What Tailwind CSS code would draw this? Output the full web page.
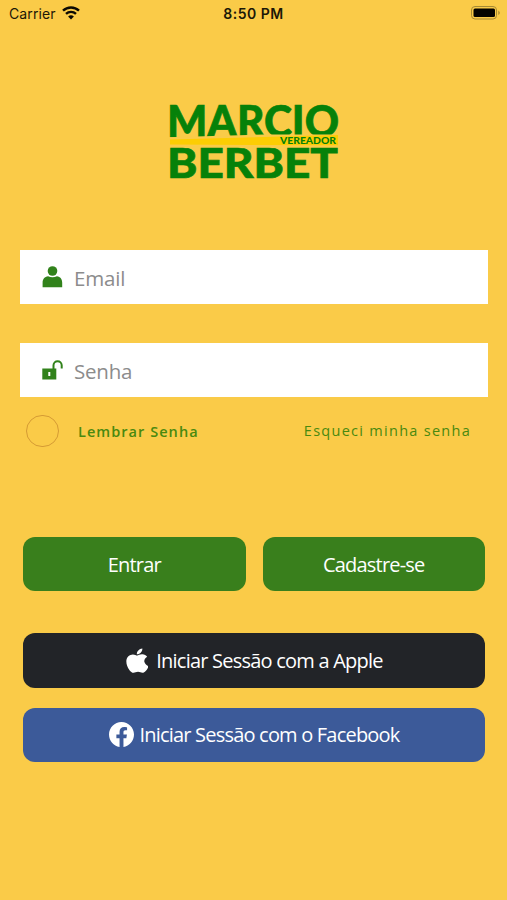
<!DOCTYPE html>
<html lang="pt-BR">
<head>
<meta charset="utf-8">
<meta name="viewport" content="width=device-width, initial-scale=1">
<title>Marcio Berbet</title>
<script src="https://cdn.jsdelivr.net/npm/@tailwindcss/browser@4"></script>
</head>
<body class="bg-[#facb48] font-['Open_Sans','Noto_Sans',sans-serif]">
<div class="flex h-[900px] w-[507px] flex-col overflow-hidden">
  <header class="grid h-[27px] grid-cols-3 items-center pl-[9px] pr-[6px] font-['Inter',sans-serif] text-[14px] text-[#1c1807]">
    <div class="flex items-center gap-[6px]">
      <span class="tracking-[0.1px]">Carrier</span>
      <svg class="-mt-[2px] h-[14px] w-[18px]" viewBox="0 0 18 14" fill="none" stroke="#0c0a03" stroke-width="2.4"><path d="M1 4.7a11.6 11.6 0 0 1 16 0M4 7.9a7.2 7.2 0 0 1 10 0"/><path d="M9 13.6 6.1 10.6a4.2 4.2 0 0 1 5.8 0Z" fill="#0c0a03" stroke="none"/></svg>
    </div>
    <span class="-ml-[3px] text-center font-semibold tracking-[0.500px] whitespace-nowrap">8:50 PM</span>
    <svg class="-mt-px h-[14px] w-[30px] justify-self-end" viewBox="0 0 30 14"><rect x=".5" y=".5" width="25" height="12.5" rx="3.5" fill="none" stroke="#a58933"/><rect x="2.5" y="2.5" width="21.500" height="8.500" rx="1.500" fill="#050400"/><path d="M27.300 4.500q3 2.300 0 4.600Z" fill="#a58933"/></svg>
  </header>

  <main class="flex flex-col">
    <svg class="mt-[73px] ml-[160px] h-[84px] w-[188px] overflow-visible" viewBox="160 100 188 84" font-family="Lato, sans-serif" fill="#068109">
      <text x="167" y="136.500" font-size="43" font-weight="900" textLength="172" lengthAdjust="spacingAndGlyphs" stroke="#068109" stroke-width=".7">MARCIO</text>
      <path d="M169 137.300 264 134.500H340V147H169Z" fill="#facb48"/>
      <path d="M170 139.500 338 135V145.300L170 144.500Z" fill="#fccd03"/>
      <text x="280" y="143.800" font-size="10" font-weight="900" textLength="56" lengthAdjust="spacingAndGlyphs">VEREADOR</text>
      <text x="167" y="177.500" font-size="42.500" font-weight="900" textLength="171" lengthAdjust="spacingAndGlyphs" stroke="#068109" stroke-width=".7">BERBET</text>
    </svg>

    <label class="mt-[66px] mr-[19px] ml-5 flex h-[54px] items-center bg-white pl-[22px] text-[20.500px] text-[#8c8c8c]">
      <svg class="mr-[11px] h-[22px] w-[21px] shrink-0" viewBox="0 0 21 22" fill="#31821b"><circle cx="10.500" cy="5" r="4.800"/><path d="M.6 21.300v-4.500c0-4 2-6 5.500-6.600 2.500 1.500 6.300 1.500 8.800 0 3.500.6 5.300 2.600 5.300 6.600v4.500Z"/></svg>
      <span class="pt-[2px] tracking-[-0.200px]">Email</span>
    </label>
    <label class="mt-[39px] mr-[19px] ml-5 flex h-[54px] items-center bg-white pl-[22px] text-[20.500px] text-[#8c8c8c]">
      <svg class="mr-[11px] h-[20px] w-[21px] shrink-0" viewBox="0 0 21 20" fill="#31821b"><path fill-rule="evenodd" d="M.3 8.500h14v11H.3ZM6.300 12v4h2v-4Z"/><path d="M11.500 9V5.300a4.100 4.100 0 0 1 8.200 0V8.500" fill="none" stroke="#31821b" stroke-width="2"/></svg>
      <span class="pt-[2px] tracking-[-0.200px]">Senha</span>
    </label>

    <div class="mt-[18px] mr-[36px] ml-[26px] flex h-8 items-center text-[14.500px] text-[#49890f]">
      <span class="h-8 w-[33px] rounded-full border-[1.500px] border-[#d59b34]"></span>
      <span class="ml-[19px] pt-[2px] font-[550] tracking-[1.050px]">Lembrar Senha</span>
      <span class="ml-auto font-medium tracking-[1.280px]">Esqueci minha senha</span>
    </div>

    <div class="mt-[90px] mr-[22px] ml-[23px] flex h-[54px] gap-[17px] text-[20px] text-white">
      <button class="flex flex-1 items-center justify-center rounded-[12px] bg-[#397f1c] pt-px tracking-[-0.800px]">Entrar</button>
      <button class="flex flex-1 items-center justify-center rounded-[12px] bg-[#397f1c] pt-px tracking-[-0.800px]">Cadastre-se</button>
    </div>

    <button class="mt-[42px] mr-[22px] ml-[23px] flex h-[55px] items-center justify-center gap-2 rounded-[12px] bg-[#222428] pl-px text-[20px] tracking-[-0.780px] text-white">
      <svg class="h-[25px] w-[22px]" viewBox="0 0 384 470" preserveAspectRatio="none" fill="#fff"><path d="M319 249c0-37 17-65 50-85-19-27-47-42-84-45-35-3-74 21-88 21-15 0-49-20-76-20C65 121 6 165 6 255c0 27 5 54 15 82 13 38 61 131 111 129 26-1 45-19 78-19 33 0 50 19 78 19 51-1 94-85 107-123-68-32-76-93-76-94ZM260 84c28-33 26-63 25-74-25 1-53 17-70 36-18 20-28 45-26 73 27 2 51-12 71-35Z"/></svg>
      <span class="pt-px">Iniciar Sessão com a Apple</span>
    </button>
    <button class="mt-5 mr-[22px] ml-[23px] flex h-[54px] items-center justify-center gap-[5px] rounded-[12px] bg-[#3c5a99] pl-px text-[20px] tracking-[-0.800px] text-white">
      <svg class="-mt-[2px] h-[25px] w-[25px]" viewBox="0 0 24 24" fill="#fff"><path d="M24 12.070C24 5.410 18.630 0 12 0S0 5.410 0 12.070C0 18.100 4.390 23.100 10.130 24v-8.440H7.080v-3.490h3.050V9.410c0-3.020 1.790-4.690 4.530-4.690 1.310 0 2.690.24 2.690.24v2.970h-1.520c-1.490 0-1.950.93-1.950 1.880v2.260h3.320l-.53 3.490h-2.790V24C19.610 23.100 24 18.100 24 12.070Z"/></svg>
      <span>Iniciar Sessão com o Facebook</span>
    </button>
  </main>
</div>
</body>
</html>
